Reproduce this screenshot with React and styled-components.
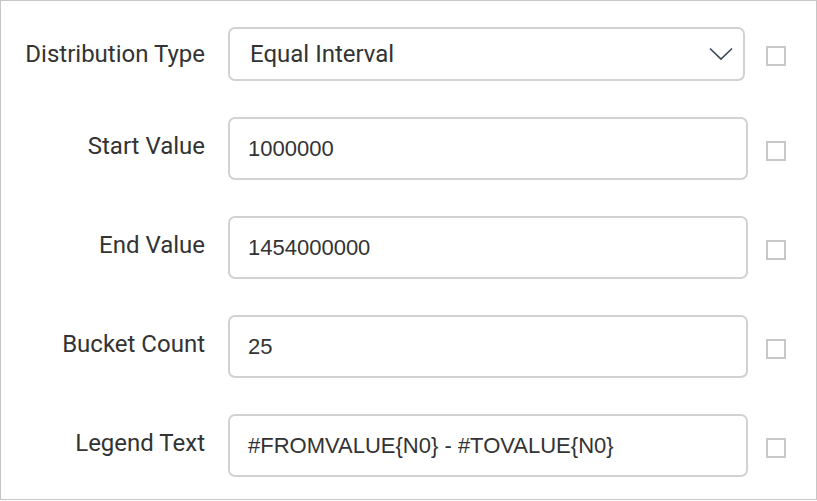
import React from "react";
import styled, { createGlobalStyle } from "styled-components";

const Global = createGlobalStyle`
  html, body { margin: 0; padding: 0; background: #fff; }
  * { box-sizing: border-box; }
`;

const Panel = styled.div`
  width: 817px;
  height: 500px;
  border: 1px solid #c6c6c6;
  background: #fff;
  padding: 26px 0 0 0;
  display: grid;
  grid-template-columns: 227px 520px auto;
  row-gap: 36px;
  grid-auto-rows: min-content;
  align-content: start;
`;

const Label = styled.div`
  font-family: Roboto, "Liberation Sans", sans-serif;
  font-size: 24px;
  color: #333;
  text-align: right;
  padding-right: 23px;
  align-self: center;
  margin-bottom: ${(p) => p.$lift}px;
  white-space: nowrap;
`;

const SelectBox = styled.div`
  width: 517px;
  height: 54px;
  border: 2px solid #d2d2d2;
  border-radius: 7px;
  display: flex;
  align-items: center;
  justify-content: space-between;
  padding: 0 10px 0 20px;
  font-family: Roboto, "Liberation Sans", sans-serif;
  font-size: 24px;
  color: #333;
`;

const TextBox = styled.div`
  width: 520px;
  height: 63px;
  border: 2px solid #d2d2d2;
  border-radius: 7px;
  display: flex;
  align-items: center;
  padding: 0 0 0 18px;
  font-family: "Liberation Sans", Arial, sans-serif;
  font-size: 22px;
  color: #333;
`;

const CheckCell = styled.div`
  align-self: center;
  margin-top: ${(p) => p.$drop}px;
  padding-left: 18px;
  display: flex;
`;

const Check = styled.div`
  width: 20px;
  height: 20px;
  border: 2px solid #c8c8c8;
  background: #fff;
`;

const Chevron = () => (
  <svg width="24" height="14" viewBox="0 0 24 14">
    <path d="M1 1.5 L12 12 L23 1.5" fill="none" stroke="#3d4b5a" strokeWidth="1.7" />
  </svg>
);

const rows = [
  { label: "Start Value", value: "1000000" },
  { label: "End Value", value: "1454000000" },
  { label: "Bucket Count", value: "25" },
  { label: "Legend Text", value: "#FROMVALUE{N0} - #TOVALUE{N0}" },
];

export default function App() {
  return (
    <>
      <Global />
      <Panel>
        <Label $lift={0}>Distribution Type</Label>
        <SelectBox>
          <span>Equal Interval</span>
          <Chevron />
        </SelectBox>
        <CheckCell $drop={3}>
          <Check />
        </CheckCell>
        {rows.map((r) => (
          <React.Fragment key={r.label}>
            <Label $lift={5}>{r.label}</Label>
            <TextBox>{r.value}</TextBox>
            <CheckCell $drop={5}>
              <Check />
            </CheckCell>
          </React.Fragment>
        ))}
      </Panel>
    </>
  );
}
